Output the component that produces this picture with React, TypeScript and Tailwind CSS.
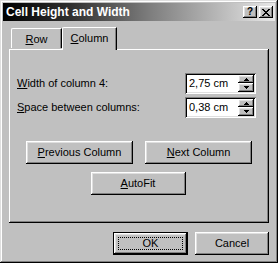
import React from "react";

const raised =
  "shadow-[inset_-1px_-1px_#000,inset_1px_1px_#fff,inset_-2px_-2px_#808080,inset_2px_2px_#dfdfdf]";

function Btn({
  children,
  className = "",
  def = false,
}: {
  children: React.ReactNode;
  className?: string;
  def?: boolean;
}) {
  if (def) {
    return (
      <div className={`border border-black bg-[#c0c0c0] ${className}`}>
        <div className={`w-full h-full ${raised} flex items-center justify-center p-[4px]`}>
          <div className="w-full h-full border border-dotted border-black flex items-center justify-center">
            {children}
          </div>
        </div>
      </div>
    );
  }
  return (
    <div className={`bg-[#c0c0c0] ${raised} flex items-center justify-center ${className}`}>
      {children}
    </div>
  );
}

function Spin({ value }: { value: string }) {
  return (
    <div className="w-[71px] h-[21px] bg-white shadow-[inset_1px_1px_#808080,inset_-1px_-1px_#fff,inset_2px_2px_#000,inset_-2px_-2px_#dfdfdf] flex items-center p-[2px]">
      <div className="flex-1 pl-[2px] text-black leading-none">{value}</div>
      <div className="flex flex-col w-[16px] h-[17px]">
        <div className={`h-[8px] bg-[#c0c0c0] ${raised} flex items-center justify-center`}>
          <svg width="5" height="3" viewBox="0 0 5 3">
            <path d="M2 0h1v1h1v1h1v1H0V2h1V1h1z" fill="#000" />
          </svg>
        </div>
        <div className={`h-[9px] bg-[#c0c0c0] ${raised} flex items-center justify-center`}>
          <svg width="5" height="3" viewBox="0 0 5 3">
            <path d="M0 0h5v1H4v1H3v1H2V2H1V1H0z" fill="#000" />
          </svg>
        </div>
      </div>
    </div>
  );
}

export default function App() {
  return (
    <div
      className="w-[278px] h-[263px] bg-[#c0c0c0] p-[3px] flex flex-col text-[11px] text-black shadow-[inset_-1px_-1px_#000,inset_1px_1px_#dfdfdf,inset_-2px_-2px_#808080,inset_2px_2px_#fff]"
      style={{ fontFamily: '"Liberation Sans", Arial, sans-serif' }}
    >
      {/* Title bar */}
      <div className="h-[18px] flex items-center bg-[linear-gradient(to_right,#000000_0%,#303030_25%,#808080_55%,#e8e8e8_100%)] pl-[3px] pr-[2px]">
        <div className="flex-1 text-white font-bold text-[12px] leading-none">
          Cell Height and Width
        </div>
        <div className={`w-[14px] h-[12px] bg-[#c0c0c0] ${raised} flex items-center justify-center text-[10px] font-bold leading-none`}>
          ?
        </div>
        <div className={`ml-[2px] w-[14px] h-[12px] bg-[#c0c0c0] ${raised} flex items-center justify-center`}>
          <svg width="8" height="7" viewBox="0 0 8 7">
            <path d="M0 0h2v1h1v1h2V1h1V0h2v1H7v1H6v1H5v1h1v1h1v1h1v1H6V6H5V5H3v1H2v1H0V6h1V5h1V4h1V3H2V2H1V1H0z" fill="#000" />
          </svg>
        </div>
      </div>

      {/* Tabs */}
      <div className="mt-[6px] ml-[6px] flex items-end h-[22px] pl-[2px] relative z-10">
        <div className="w-[51px] h-[20px] mb-[1px] border-l border-t border-white rounded-tl-[2px] shadow-[inset_-1px_0_#808080] border-r border-r-black flex items-center justify-center pt-[1px]">
          <span>
            <span className="underline">R</span>ow
          </span>
        </div>
        <div className="w-[55px] h-[23px] -mb-[1px] bg-[#c0c0c0] border-l border-t border-white rounded-tl-[2px] border-r border-r-black shadow-[inset_-1px_0_#808080] flex items-center justify-center pb-[2px]">
          <span>
            <span className="underline">C</span>olumn
          </span>
        </div>
      </div>

      {/* Panel */}
      <div className="ml-[6px] w-[260px] h-[174px] shadow-[inset_-1px_-1px_#000,inset_1px_1px_#fff,inset_-2px_-2px_#808080] flex flex-col pt-[24px]">
        <div className="flex items-center justify-between pl-[8px] pr-[13px] h-[21px]">
          <span>
            <span className="underline">W</span>idth of column 4:
          </span>
          <Spin value="2,75 cm" />
        </div>
        <div className="flex items-center justify-between pl-[8px] pr-[13px] h-[21px] mt-[3px]">
          <span>
            <span className="underline">S</span>pace between columns:
          </span>
          <Spin value="0,38 cm" />
        </div>
        <div className="flex justify-center gap-[12px] mt-[23px]">
          <Btn className="w-[107px] h-[23px]">
            <span>
              <span className="underline">P</span>revious Column
            </span>
          </Btn>
          <Btn className="w-[107px] h-[23px]">
            <span>
              <span className="underline">N</span>ext Column
            </span>
          </Btn>
        </div>
        <div className="flex justify-center mt-[8px] pr-[2px]">
          <Btn className="w-[95px] h-[23px]">
            <span>
              <span className="underline">A</span>utoFit
            </span>
          </Btn>
        </div>
      </div>

      {/* Bottom buttons */}
      <div className="flex justify-end gap-[7px] mt-[9px] pr-[6px]">
        <Btn def className="w-[75px] h-[23px]">
          OK
        </Btn>
        <Btn className="w-[74px] h-[23px]">Cancel</Btn>
      </div>
    </div>
  );
}
